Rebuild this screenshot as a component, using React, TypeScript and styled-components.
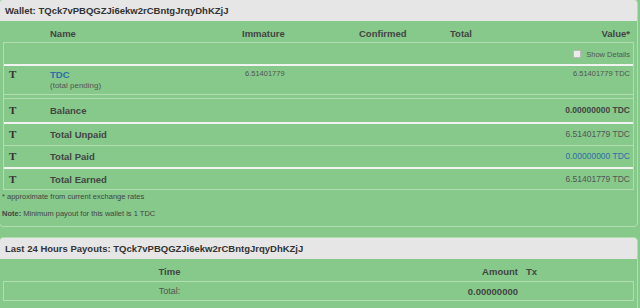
import React from "react";
import styled, { createGlobalStyle } from "styled-components";

const GREEN = "#86c98a";
const LINE = "#b2dcb2";
const WHITE_LINE = "#f0f3f0";
const BLUE = "#2f6ca8";

const Global = createGlobalStyle`
  html, body { margin: 0; padding: 0; background: ${GREEN}; }
  body {
    font-family: "Liberation Sans", Arial, sans-serif;
    color: #444;
    overflow: hidden;
  }
`;

const Page = styled.div`
  display: flex;
  flex-direction: column;
  gap: 10px;
  width: 639px;
  margin: -1px 0 0 -1px;
`;

const Panel = styled.section`
  border: 1px solid ${LINE};
  border-radius: 4px;
  background: ${GREEN};
  overflow: hidden;
`;

const PanelHeading = styled.h3`
  margin: 0;
  height: 21px;
  padding: 0 5px;
  background: #e6e6e6;
  color: #333;
  font-size: 9.5px;
  font-weight: bold;
  display: flex;
  align-items: center;
`;

const walletCols = "46px 192px 117px 91px 100px 1fr";
const payoutCols = "331px 187px 1fr";

const HeadRow = styled.div<{ $cols: string; $padBottom?: number }>`
  display: grid;
  grid-template-columns: ${(p) => p.$cols};
  padding: 6px 4px ${(p) => p.$padBottom ?? 2}px;
  line-height: 13px;
  font-size: 9.5px;
  font-weight: bold;
  color: #444;
`;

const HeadCell = styled.div<{ $align?: "left" | "right" | "center"; $pad?: string }>`
  text-align: ${(p) => p.$align ?? "left"};
  padding: ${(p) => p.$pad ?? "0"};
  white-space: nowrap;
`;

const Table = styled.div`
  margin: 0 3px;
  border: 1px solid ${LINE};
`;

const TableRow = styled.div<{
  $cols: string;
  $sep?: "thin" | "thick";
  $h: number;
  $align?: "start" | "center";
}>`
  display: grid;
  grid-template-columns: ${(p) => p.$cols};
  height: ${(p) => p.$h}px;
  align-items: ${(p) => p.$align ?? "center"};
  padding-top: ${(p) => (p.$align === "start" ? "3px" : "0")};
  box-sizing: content-box;
  border-top: ${(p) =>
    p.$sep === "thick"
      ? `2px solid ${WHITE_LINE}`
      : p.$sep === "thin"
      ? `1px solid ${LINE}`
      : "none"};
`;

const OptionsRow = styled.div`
  height: 20px;
  display: flex;
  justify-content: flex-end;
  align-items: center;
  gap: 5px;
  padding: 1px 3px 0 0;
  font-size: 7.5px;
  color: #555;
`;

const CheckBox = styled.input`
  appearance: none;
  margin: 0 0 1px;
  width: 8px;
  height: 8px;
  border: 1px solid #b9b9b9;
  border-radius: 1px;
  background: #ececec;
  box-sizing: border-box;
`;

const CheckLabel = styled.span`
  line-height: 10px;
  padding-top: 2px;
`;

const Coin = styled.div`
  padding-left: 5px;
  font-family: "Liberation Serif", "Times New Roman", serif;
  font-size: 11px;
  font-weight: bold;
  line-height: 11px;
  color: #333;
`;

const NameCell = styled.div`
  display: flex;
  flex-direction: column;
`;

const Label = styled.span<{ $link?: boolean }>`
  font-size: 9.5px;
  font-weight: bold;
  line-height: 11px;
  color: ${(p) => (p.$link ? BLUE : "#444")};
`;

const SubLabel = styled.span`
  font-size: 8px;
  line-height: 10px;
  padding-top: 1px;
  color: #555;
`;

const Num = styled.div<{
  $size?: number;
  $bold?: boolean;
  $link?: boolean;
  $align?: "left" | "right" | "center";
  $pad?: string;
}>`
  font-size: ${(p) => p.$size ?? 8.5}px;
  font-weight: ${(p) => (p.$bold ? "bold" : "normal")};
  line-height: ${(p) => ((p.$size ?? 8.5) < 8 ? 8 : 11)}px;
  color: ${(p) => (p.$link ? BLUE : p.$bold ? "#444" : "#555")};
  text-align: ${(p) => p.$align ?? "right"};
  padding: ${(p) => p.$pad ?? "0 3px 0 0"};
  white-space: nowrap;
`;

const Footer = styled.div`
  display: flex;
  flex-direction: column;
  gap: 6.5px;
  padding: 2px 2px 7.5px;
  font-size: 7.5px;
  line-height: 10px;
  color: #444;
`;

const Strong = styled.b`
  font-weight: bold;
`;

const PayoutBody = styled.div`
  padding-bottom: 20px;
`;

const ADDRESS = "TQck7vPBQGZJi6ekw2rCBntgJrqyDhKZjJ";

type Summary = {
  label: string;
  value: string;
  sep: "thin" | "thick";
  h: number;
  bold?: boolean;
  link?: boolean;
};

const summaries: Summary[] = [
  { label: "Balance", value: "0.00000000 TDC", sep: "thin", h: 23, bold: true },
  { label: "Total Unpaid", value: "6.51401779 TDC", sep: "thick", h: 21 },
  { label: "Total Paid", value: "0.00000000 TDC", sep: "thin", h: 21, link: true },
  { label: "Total Earned", value: "6.51401779 TDC", sep: "thick", h: 20 },
];

export default function App() {
  return (
    <>
      <Global />
      <Page>
        <Panel>
          <PanelHeading>Wallet: {ADDRESS}</PanelHeading>
          <HeadRow $cols={walletCols}>
            <HeadCell />
            <HeadCell>Name</HeadCell>
            <HeadCell>Immature</HeadCell>
            <HeadCell>Confirmed</HeadCell>
            <HeadCell>Total</HeadCell>
            <HeadCell $align="right" $pad="0 3px 0 0">
              Value*
            </HeadCell>
          </HeadRow>
          <Table>
            <OptionsRow>
              <CheckBox type="checkbox" aria-label="Show Details" />
              <CheckLabel>Show Details</CheckLabel>
            </OptionsRow>
            <TableRow $cols={walletCols} $sep="thick" $h={25} $align="start">
              <Coin>T</Coin>
              <NameCell>
                <Label $link>TDC</Label>
                <SubLabel>(total pending)</SubLabel>
              </NameCell>
              <Num $size={7.5} $align="left" $pad="1px 0 0 3px">
                6.51401779
              </Num>
              <div />
              <div />
              <Num $size={7.5} $pad="1px 3px 0 0">
                6.51401779 TDC
              </Num>
            </TableRow>
            <TableRow $cols={walletCols} $sep="thin" $h={3} />
            {summaries.map((s) => (
              <TableRow key={s.label} $cols={walletCols} $sep={s.sep} $h={s.h}>
                <Coin>T</Coin>
                <Label>{s.label}</Label>
                <div />
                <div />
                <div />
                <Num $bold={s.bold} $link={s.link}>
                  {s.value}
                </Num>
              </TableRow>
            ))}
          </Table>
          <Footer>
            <span>* approximate from current exchange rates</span>
            <span>
              <Strong>Note:</Strong> Minimum payout for this wallet is 1 TDC
            </span>
          </Footer>
        </Panel>
        <Panel>
          <PanelHeading>Last 24 Hours Payouts: {ADDRESS}</PanelHeading>
          <PayoutBody>
            <HeadRow $cols={payoutCols} $padBottom={3}>
              <HeadCell $align="center">Time</HeadCell>
              <HeadCell $align="right" $pad="0 4px 0 0">
                Amount
              </HeadCell>
              <HeadCell $pad="0 0 0 4px">Tx</HeadCell>
            </HeadRow>
            <Table>
              <TableRow $cols={payoutCols} $h={18}>
                <Num $size={9} $align="center" $pad="0">
                  Total:
                </Num>
                <Num $size={9.5} $bold $pad="0 4px 0 0">
                  0.00000000
                </Num>
                <div />
              </TableRow>
            </Table>
          </PayoutBody>
        </Panel>
      </Page>
    </>
  );
}
